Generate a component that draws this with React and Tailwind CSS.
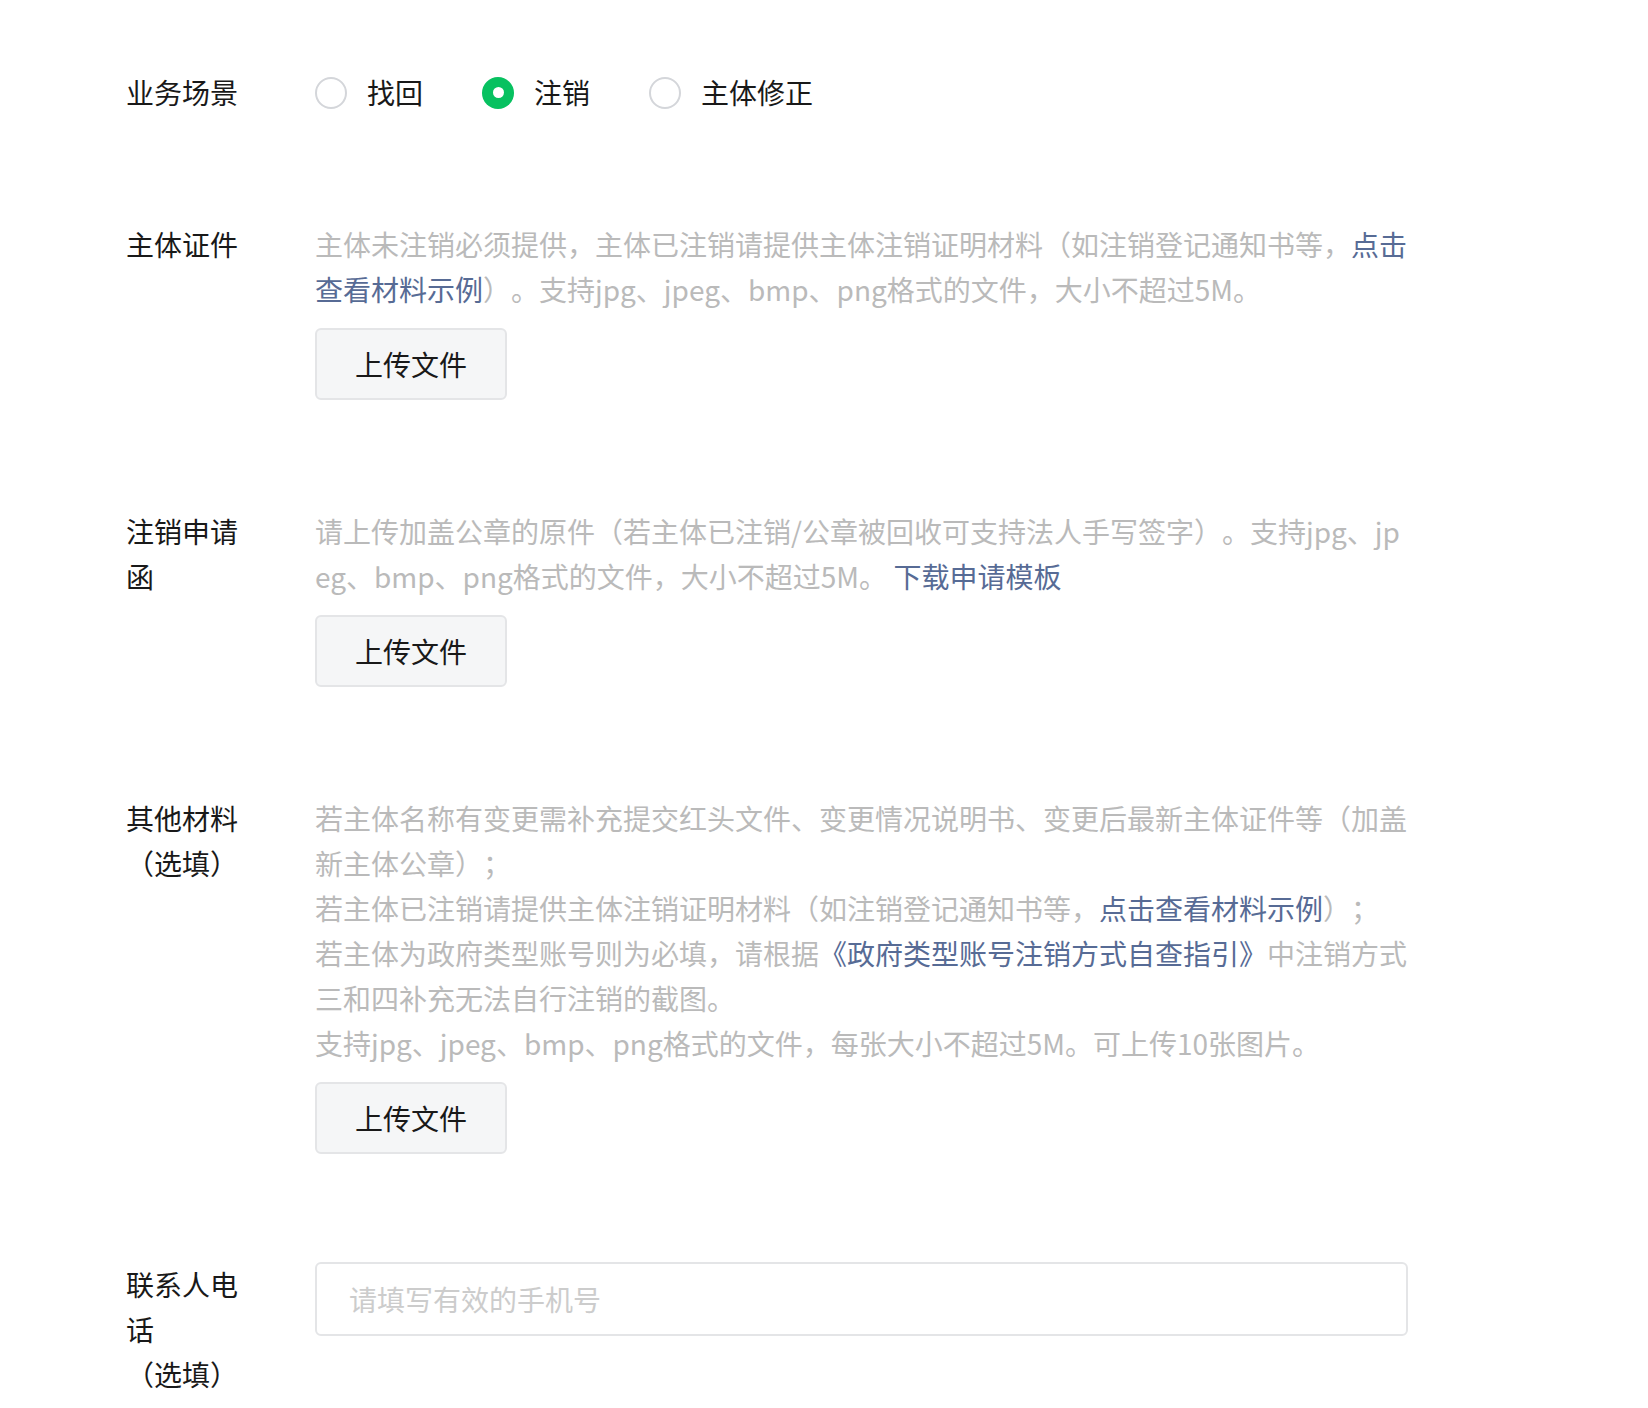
import React, { useState } from 'react';

const font = { fontFamily: '"Noto Sans CJK SC", "Noto Sans", sans-serif' };

const Link = ({ children }) => (
  <a href="#" className="text-[#576b95] no-underline">{children}</a>
);

const UploadButton = () => (
  <button
    type="button"
    className="mt-4 h-[72px] w-[192px] rounded-[6px] border-2 border-[#e4e5e7] bg-[#f5f6f7] text-[28px] leading-[45px] text-[#191919]"
  >
    上传文件
  </button>
);

const Row = ({ label, sub, className = '', children }) => (
  <div className={`flex items-start ${className}`}>
    <div className="mr-[69px] w-[120px] shrink-0 text-[28px] leading-[45px] text-[#191919]">
      <div>{label}</div>
      {sub && <div>{sub}</div>}
    </div>
    <div className="w-[1093px] shrink-0">{children}</div>
  </div>
);

const Radio = ({ checked, label, onClick }) => (
  <label onClick={onClick} className="flex cursor-pointer items-center">
    {checked ? (
      <span className="flex h-[32px] w-[32px] items-center justify-center rounded-full bg-[#07c160]">
        <span className="h-[11px] w-[11px] rounded-full bg-white" />
      </span>
    ) : (
      <span className="h-[32px] w-[32px] rounded-full border-2 border-[#d4d6da] bg-white" />
    )}
    <span className="ml-[20px] text-[28px] leading-[45px] text-[#191919]">{label}</span>
  </label>
);

export default function App() {
  const [scene, setScene] = useState('注销');

  return (
    <div style={font} className="min-h-screen bg-white pl-[126px] pt-[70px] [text-spacing-trim:space-all]">
      <Row label="业务场景">
        <div className="flex items-center gap-[59px]">
          {['找回', '注销', '主体修正'].map((s) => (
            <Radio key={s} label={s} checked={scene === s} onClick={() => setScene(s)} />
          ))}
        </div>
      </Row>

      <Row label="主体证件" className="mt-[107px]">
        <p className="break-all text-[28px] leading-[45px] text-[#bababa]">
          主体未注销必须提供，主体已注销请提供主体注销证明材料（如注销登记通知书等，<Link>点击查看材料示例</Link>）。支持jpg、jpeg、bmp、png格式的文件，大小不超过5M。
        </p>
        <UploadButton />
      </Row>

      <Row label="注销申请函" className="mt-[109px]">
        <p className="break-all text-[28px] leading-[45px] text-[#bababa]">
          请上传加盖公章的原件（若主体已注销/公章被回收可支持法人手写签字）。支持jpg、jpeg、bmp、png格式的文件，大小不超过5M。 <Link>下载申请模板</Link>
        </p>
        <UploadButton />
      </Row>

      <Row label="其他材料" sub="（选填）" className="mt-[109px]">
        <div className="break-all text-[28px] leading-[45px] text-[#bababa]">
          <p>若主体名称有变更需补充提交红头文件、变更情况说明书、变更后最新主体证件等（加盖新主体公章）；</p>
          <p>若主体已注销请提供主体注销证明材料（如注销登记通知书等，<Link>点击查看材料示例</Link>）；</p>
          <p>若主体为政府类型账号则为必填，请根据<Link>《政府类型账号注销方式自查指引》</Link>中注销方式三和四补充无法自行注销的截图。</p>
          <p>支持jpg、jpeg、bmp、png格式的文件，每张大小不超过5M。可上传10张图片。</p>
        </div>
        <UploadButton />
      </Row>

      <Row label="联系人电话" sub="（选填）" className="mt-[108px]">
        <input
          type="text"
          placeholder="请填写有效的手机号"
          className="h-[74px] w-full rounded-[6px] border-2 border-[#e4e5e7] bg-white px-[32px] text-[28px] text-[#191919] outline-none placeholder:text-[#cccccc]"
        />
      </Row>
    </div>
  );
}
